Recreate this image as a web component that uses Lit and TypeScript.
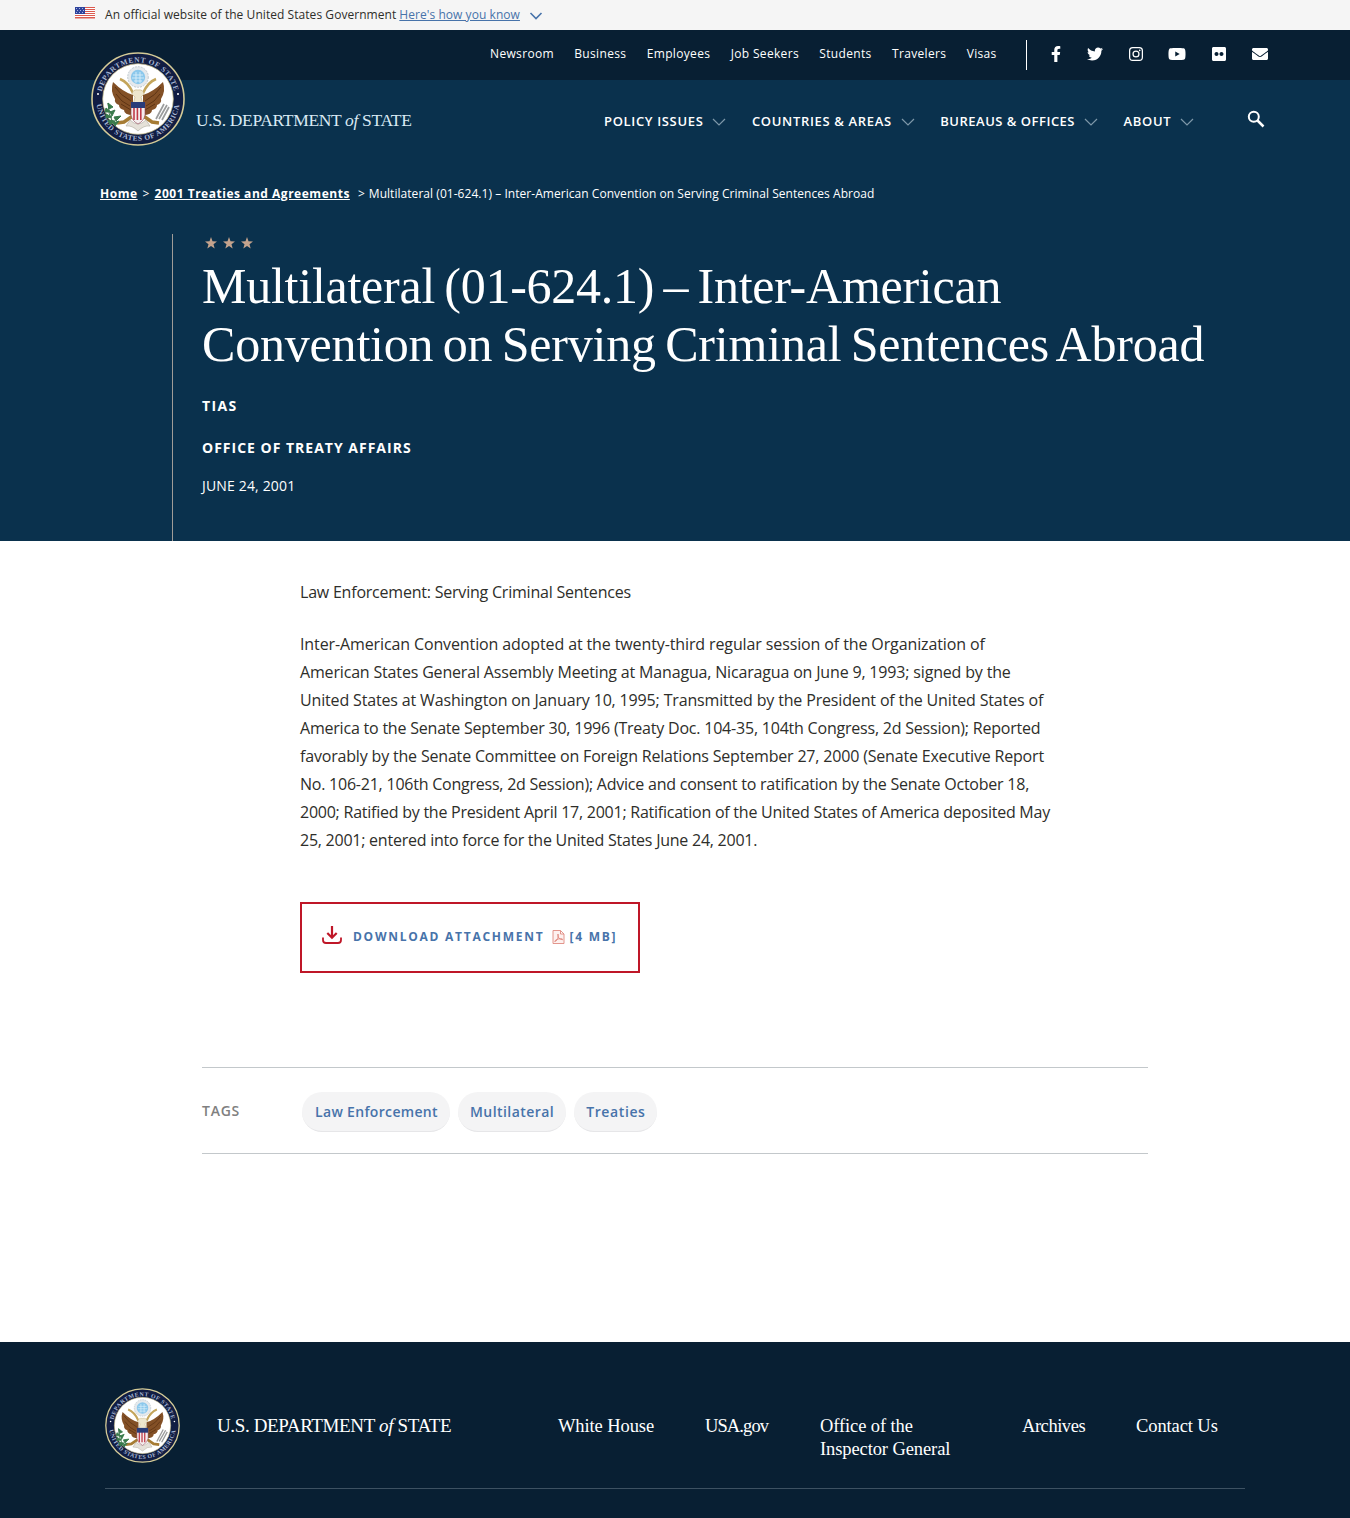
import { LitElement, html, css, svg } from "lit";
import { customElement, property } from "lit/decorators.js";

@customElement("state-seal")
class StateSeal extends LitElement {
  @property({ type: Number }) size = 94;
  static styles = css`
    :host { display: block; line-height: 0; }
    .ring { font: 700 7.4px "Liberation Serif", serif; fill: #a9b8d4; letter-spacing: 0.75px; }
  `;
  render() {
    const stripes = [43, 46.4, 49.8].map((x) => svg`<path d="M${x} 53v15" stroke="#c03a48" stroke-width="1.6"/>`);
    return html`<svg width=${this.size} height=${this.size} viewBox="0 0 94 94" role="img" aria-label="Department of State seal">
      <defs>
        <path id="top" d="M10.2 47a36.8 36.8 0 0 1 73.6 0"/>
        <path id="bottom" d="M5.2 47a41.8 41.8 0 0 0 83.6 0"/>
      </defs>
      <circle cx="47" cy="47" r="46" fill="#111d43" stroke="#d5cb97" stroke-width="1.6"/>
      <circle cx="47" cy="47" r="35.3" fill="#fff" stroke="#c8bd85" stroke-width=".7"/>
      <text class="ring"><textPath href="#top" startOffset="50%" text-anchor="middle" textLength="101">DEPARTMENT OF STATE</textPath></text>
      <text class="ring"><textPath href="#bottom" startOffset="50%" text-anchor="middle" textLength="120">UNITED STATES OF AMERICA</textPath></text>
      <circle cx="7" cy="42" r="1" fill="#fff"/><circle cx="87" cy="42" r="1" fill="#fff"/>
      <circle cx="47" cy="25" r="10.3" fill="#e5e9ec" stroke="#bfc9cf" stroke-width="1" stroke-dasharray="2 1"/>
      <circle cx="47" cy="25" r="7.2" fill="#8bc8ec"/>
      <path d="M42 23h10M41 26h12M43 29h8M45 20v11M49 20v11" stroke="#d8eefa" stroke-width=".9"/>
      <path d="M29 27q8 3 13 14M65 27q-8 3-13 14" stroke="#c4a55b" stroke-width="2.6" fill="none"/>
      <path d="M42 43Q32 40 22 30q-3 9 2 17-1 4 4 6 0 4 5 5 0 5 9 5zM52 43q10-3 20-13 3 9-2 17 1 4-4 6 0 4-5 5 0 5-9 5z" fill="#835026"/>
      <path d="M24 35q5 8 16 14M25 42q5 8 14 12M30 52l10 6M70 35q-5 8-16 14M69 42q-5 8-14 12M64 52l-10 6" stroke="#5e3414" stroke-width="1" fill="none"/>
      <path d="M47 38q-5-1-6 4l3 3-2 8h10l-2-8 3-3q-1-5-6-4z" fill="#eee6cd" stroke="#bba36a" stroke-width=".5"/>
      <path d="M43 63L33 70l-7 1M51 63l10 7 7 1" stroke="#a67c34" stroke-width="3.4" fill="none"/>
      <path d="M22 71q-5-9-5-20" stroke="#386741" fill="none"/>
      <path d="M17 51l5 4-4 2zM15 56l5 4-6 0zM24 58l-3 6-2-4zM15 62l6 3-6 1zM30 64l-5 5-2-4zM17 68l7 1-5 4zM28 69l-4 5-2-3z" fill="#397a4b" stroke="#397a4b"/>
      <path d="M65 67L73 52M68 67l8-14M71 68l7-13" stroke="#9b9c9c" stroke-width="1.700"/>
      <path d="M39 68q8 8 16 0l4 6q-6-1-12 5-6-6-12-5z" fill="#e5e1d9" stroke="#b5b0a5" stroke-width=".7"/>
      <path d="M40 51h14v12q-1 6-7 9-6-3-7-9z" fill="#f4eeee" stroke="#8e4052" stroke-width=".6"/>
      ${stripes}
      <path d="M40 50h14v6H40z" fill="#293c79"/>
    </svg>`;
  }
}

const chevron = html`<svg class="chev" width="14" height="8" viewBox="0 0 14 8"><path d="M1 1l6 6 6-6" fill="none" stroke="currentColor" stroke-width="1.200"/></svg>`;

const social = [
  { name: "Facebook", w: 10, box: "0 0 320 512", d: "M279.14 288l14.22-92.66h-88.91v-60.13c0-25.35 12.42-50.06 52.24-50.06h40.42V6.26S260.43 0 225.36 0c-73.22 0-121.08 44.38-121.08 124.72v70.62H22.89V288h81.39v224h100.17V288z" },
  { name: "Twitter", w: 16, box: "0 0 512 512", d: "M459.37 151.716c.325 4.548.325 9.097.325 13.645 0 138.72-105.583 298.558-298.558 298.558-59.452 0-114.68-17.219-161.137-47.106 8.447.974 16.568 1.299 25.34 1.299 49.055 0 94.213-16.568 130.274-44.832-46.132-.975-84.792-31.188-98.112-72.772 6.498.974 12.995 1.624 19.818 1.624 9.421 0 18.843-1.3 27.614-3.573-48.081-9.747-84.143-51.98-84.143-102.985v-1.299c13.969 7.797 30.214 12.67 47.431 13.319-28.264-18.843-46.781-51.005-46.781-87.391 0-19.492 5.197-37.36 14.294-52.954 51.655 63.675 129.3 105.258 216.365 109.807-1.624-7.797-2.599-15.918-2.599-24.04 0-57.828 46.782-104.934 104.934-104.934 30.213 0 57.502 12.67 76.67 33.137 23.715-4.548 46.456-13.32 66.599-25.34-7.798 24.366-24.366 44.833-46.132 57.827 21.117-2.273 41.584-8.122 60.426-16.243-14.292 20.791-32.161 39.308-52.628 54.253z" },
  { name: "Instagram", w: 14, box: "32 0 448 512", d: "M150 32h212a118 118 0 0 1 118 118v212a118 118 0 0 1-118 118H150A118 118 0 0 1 32 362V150A118 118 0 0 1 150 32zm5 40a83 83 0 0 0-83 83v202a83 83 0 0 0 83 83h202a83 83 0 0 0 83-83V155a83 83 0 0 0-83-83zM256 141a115 115 0 1 1 0 230 115 115 0 0 1 0-230zm0 40a75 75 0 1 0 0 150 75 75 0 0 0 0-150zM375 110a27 27 0 1 1 0 54 27 27 0 0 1 0-54z" },
  { name: "YouTube", w: 18, box: "0 0 576 512", d: "M549.655 124.083c-6.281-23.65-24.787-42.276-48.284-48.597C458.781 64 288 64 288 64S117.22 64 74.629 75.486c-23.497 6.322-42.003 24.947-48.284 48.597-11.412 42.867-11.412 132.305-11.412 132.305s0 89.438 11.412 132.305c6.281 23.65 24.787 41.5 48.284 47.821C117.22 448 288 448 288 448s170.78 0 213.371-11.486c23.497-6.321 42.003-24.171 48.284-47.821 11.412-42.867 11.412-132.305 11.412-132.305s0-89.438-11.412-132.305zm-317.51 213.508V175.185l142.739 81.205-142.739 81.201z" },
  { name: "Flickr", w: 14, box: "0 0 448 512", d: "M400 32H48C21.500 32 0 53.500 0 80v352c0 26.500 21.500 48 48 48h352c26.500 0 48-21.500 48-48V80c0-26.500-21.500-48-48-48zM144.500 319c-35.100 0-63.500-28.400-63.500-63.500s28.400-63.500 63.500-63.500 63.500 28.400 63.500 63.500-28.400 63.500-63.500 63.500zm159 0c-35.100 0-63.500-28.400-63.500-63.500s28.400-63.500 63.500-63.500 63.500 28.400 63.500 63.500-28.400 63.500-63.500 63.500z" },
  { name: "Email", w: 16, box: "0 0 512 512", d: "M502.300 190.800c3.900-3.100 9.700-.2 9.700 4.700V400c0 26.500-21.500 48-48 48H48c-26.500 0-48-21.500-48-48V195.600c0-5 5.700-7.800 9.700-4.700 22.400 17.400 52.100 39.500 154.100 113.600 21.100 15.400 56.700 47.800 92.200 47.600 35.700.3 72-32.800 92.300-47.600 102-74.100 131.600-96.300 154-113.700zM256 320c23.200.4 56.600-29.200 73.400-41.400 132.700-96.300 142.800-104.700 173.400-128.700 5.800-4.500 9.200-11.500 9.200-18.900v-19c0-26.500-21.500-48-48-48H48c-26.500 0-48 21.500-48 48v19c0 7.400 3.400 14.300 9.200 18.900 30.600 23.900 40.700 32.400 173.400 128.700 16.800 12.200 50.200 41.800 73.400 41.400z" },
];

const treaty = [
  "Inter-American Convention adopted at the twenty-third regular session of the Organization of",
  "American States General Assembly Meeting at Managua, Nicaragua on June 9, 1993; signed by the",
  "United States at Washington on January 10, 1995; Transmitted by the President of the United States of",
  "America to the Senate September 30, 1996 (Treaty Doc. 104-35, 104th Congress, 2d Session); Reported",
  "favorably by the Senate Committee on Foreign Relations September 27, 2000 (Senate Executive Report",
  "No. 106-21, 106th Congress, 2d Session); Advice and consent to ratification by the Senate October 18,",
  "2000; Ratified by the President April 17, 2001; Ratification of the United States of America deposited May",
  "25, 2001; entered into force for the United States June 24, 2001.",
];

@customElement("app-root")
class AppRoot extends LitElement {
  static styles = css`
    :host { display: block; height: 1518px; overflow: hidden; background: #fff; color: #323a45; font-family: "Open Sans", sans-serif; }
    * { box-sizing: border-box; }
    a { color: inherit; text-decoration: none; white-space: nowrap; }
    svg { display: block; flex: none; }
    p, h1 { margin: 0; }
    .gov { height: 30px; background: #f5f5f5; display: flex; align-items: flex-start; padding: 6px 0 0 75px; font-size: 12px; line-height: 17px; color: #2e2e2a; white-space: nowrap; letter-spacing: .055px; }
    .flag { margin: 1px 10px 0 0; }
    .gov a { color: #4773aa; text-decoration: underline; margin-left: 3px; }
    .gov .down { margin: 6px 0 0 9px; color: #4773aa; }
    .hero { height: 511px; background: #0a314d; color: #fff; }
    .util { height: 50px; background: #081f33; display: flex; padding: 10px 82px 0 490px; }
    .links { display: flex; gap: 20.300px; width: 537px; height: 30px; border-right: 1px solid #fff; font-size: 12px; line-height: 28px; letter-spacing: .34px; }
    .social { display: flex; flex: 1; justify-content: space-between; padding: 6px 0 0 24px; }
    .main { height: 72px; display: flex; padding-left: 91px; }
    .brandseal { margin-top: -28px; }
    .brand { font-family: "Liberation Serif", serif; white-space: nowrap; }
    .main .brand { width: 408px; margin: 28px 0 0 11px; font-size: 17.500px; line-height: 24px; letter-spacing: -.34px; color: #d9e9f4; }
    .menu { display: flex; gap: 25.500px; font-size: 13px; font-weight: 600; line-height: 20px; letter-spacing: .66px; padding-top: 31px; }
    .menu a { display: flex; }
    .menu .i2 { letter-spacing: .5px; }
    .menu .chev { margin: 7px 0 0 9px; color: #7e98a9; }
    .search { margin: 30px 0 0 53px; }
    .crumbs { display: flex; height: 36px; align-items: flex-start; padding: 33px 0 0 100px; font-size: 12px; line-height: 17px; letter-spacing: .045px; white-space: nowrap; }
    .crumbs a { font-weight: 700; text-decoration: underline; letter-spacing: .52px; }
    .crumbs .sep { margin: 0 5px; }
    .crumbs .sep2 { margin: 0 4px 0 8px; }
    .title { margin: 46px 0 0 172px; height: 307px; border-left: 1px solid #a09c98; padding: 3px 0 0 29px; }
    .stars { display: flex; gap: 6px; padding-left: 3px; }
    h1 { margin-top: 8px; font: 400 50px/58px "Liberation Serif", serif; letter-spacing: -.25px; word-spacing: -3px; white-space: nowrap; }
    h1 span { display: block; }
    h1 .second { letter-spacing: -.19px; }
    .meta { font-size: 14px; line-height: 20px; font-weight: 700; letter-spacing: 1px; }
    .m1 { margin-top: 23px; letter-spacing: 1.400px; }
    .m2 { margin-top: 22px; }
    .date { margin-top: 18px; font-size: 14px; line-height: 20px; letter-spacing: .16px; }
    .article { height: 526px; padding: 37px 0 0 300px; font-size: 16px; line-height: 28px; letter-spacing: -.215px; color: #2e2e2a; white-space: nowrap; }
    .article p + p { margin-top: 24px; }
    .ln { display: block; }
    .ln:nth-child(1) { letter-spacing: -.115px; }
    .ln:nth-child(2) { letter-spacing: -.17px; }
    .ln:nth-child(3) { letter-spacing: -.155px; }
    .ln:nth-child(4) { letter-spacing: -.21px; }
    .ln:nth-child(5) { letter-spacing: -.18px; }
    .ln:nth-child(6) { letter-spacing: -.23px; }
    .ln:nth-child(7), .ln:nth-child(8) { letter-spacing: -.243px; }
    .download { margin-top: 48px; width: 340px; height: 71px; border: 2px solid #bf1728; display: flex; align-items: flex-start; padding: 21px 0 0 20px; font-size: 12px; line-height: 24px; font-weight: 700; letter-spacing: 1.740px; color: #4773aa; }
    .dl { margin: 1px 11px 0 0; }
    .pdf { margin: 5px 5px 0 7px; }
    .tags { width: 946px; height: 87px; margin-left: 202px; border: solid #c3c8cb; border-width: 1px 0; display: flex; align-items: flex-start; padding-top: 24px; }
    .label { width: 100px; font-size: 14px; font-weight: 600; line-height: 38px; color: #808080; letter-spacing: .75px; }
    .pills { display: flex; gap: 8px; }
    .pills a { height: 40px; border-radius: 20px; background: #f4f4f5; border-bottom: 1px solid #e6e6e8; padding: 0 12px 0 13px; font-size: 14px; font-weight: 600; line-height: 40px; color: #4773aa; letter-spacing: .33px; }
    .pills a + a { padding: 0 12px; letter-spacing: .45px; }
    .pills a + a + a { letter-spacing: .6px; }
    .foot { margin-top: 188px; height: 176px; background: #081f33; color: #fff; padding: 46px 105px 0; }
    .row { height: 101px; border-bottom: 1px solid #3d5162; display: flex; font-family: "Liberation Serif", serif; }
    .row .brand { margin: 26px 0 0 37px; width: 341px; font-size: 19px; line-height: 24px; letter-spacing: -.36px; }
    .row nav { display: grid; grid-template-columns: 147px 115px 202px 114px auto; font-size: 18.500px; line-height: 23px; padding-top: 27px; letter-spacing: -.1px; }
    .row nav .tight { letter-spacing: -.9px; }
    .row nav .snug { letter-spacing: -.45px; }
  `;
  render() {
    const star = html`<svg width="12" height="12" viewBox="0 0 12 12"><path fill="#c4a38d" d="M6 0l1.500 4.200L12 4.400 8.500 7.200 9.700 11.500 6 9 2.300 11.500 3.500 7.200 0 4.400l4.500-.2z"/></svg>`;
    return html`
      <div class="gov">
        <svg class="flag" width="20" height="12" viewBox="0 0 20 12"><path fill="#fff" d="M0 0h20v12H0z"/><path fill="#db5a4f" d="M0 0h20v1H0zM0 2h20v1H0zM0 4h20v1H0zM0 6h20v1H0zM0 8h20v1H0zM0 10h20v1.500H0z"/><path fill="#2f449c" d="M0 0h10v7H0z"/><path fill="#a9b4e0" d="M1 1h1v1H1zM4 1h1v1H4zM7 1h1v1H7zM2 3h1v1H2zM5 3h1v1H5zM8 3h1v1H8zM1 5h1v1H1zM4 5h1v1H4zM7 5h1v1H7z"/></svg>
        <span>An official website of the United States Government</span><a href="#">Here's how you know</a>
        <svg class="down" width="14" height="8" viewBox="0 0 14 8"><path d="M1.500 1l5.500 5.500L12.500 1" fill="none" stroke="currentColor" stroke-width="1.600"/></svg>
      </div>
      <header class="hero">
        <div class="util">
          <nav class="links">${["Newsroom", "Business", "Employees", "Job Seekers", "Students", "Travelers", "Visas"].map((t) => html`<a href="#">${t}</a>`)}</nav>
          <div class="social">${social.map((s) => html`<svg width=${s.w} height="16" viewBox=${s.box} aria-label=${s.name}><path fill="#fff" fill-rule="evenodd" d=${s.d}/></svg>`)}</div>
        </div>
        <div class="main">
          <state-seal class="brandseal" .size=${94}></state-seal>
          <div class="brand">U.S. DEPARTMENT <i>of</i> STATE</div>
          <nav class="menu">${["POLICY ISSUES", "COUNTRIES & AREAS", "BUREAUS & OFFICES", "ABOUT"].map((t, i) => html`<a href="#" class="i${i}">${t}${chevron}</a>`)}</nav>
          <svg class="search" width="18" height="18" viewBox="0 0 18 18"><circle cx="6.800" cy="6.800" r="5" fill="none" stroke="#fff" stroke-width="2"/><path d="M10.500 10.500l6 6" stroke="#fff" stroke-width="2.500"/></svg>
        </div>
        <div class="crumbs"><a href="#">Home</a><span class="sep">&gt;</span><a href="#">2001 Treaties and Agreements</a><span class="sep2">&gt;</span><span>Multilateral (01-624.1) – Inter-American Convention on Serving Criminal Sentences Abroad</span></div>
        <div class="title">
          <div class="stars">${star}${star}${star}</div>
          <h1><span>Multilateral (01-624.1) – Inter-American</span><span class="second">Convention on Serving Criminal Sentences Abroad</span></h1>
          <p class="meta m1">TIAS</p>
          <p class="meta m2">OFFICE OF TREATY AFFAIRS</p>
          <p class="date">JUNE 24, 2001</p>
        </div>
      </header>
      <main class="article">
        <p>Law Enforcement: Serving Criminal Sentences</p>
        <p>${treaty.map((t) => html`<span class="ln">${t}</span>`)}</p>
        <a class="download" href="#">
          <svg class="dl" width="20" height="18" viewBox="0 0 20 18"><path d="M1 11.500v2.500q0 3 3 3h12q3 0 3-3v-2.500" fill="none" stroke="#bf1728" stroke-width="1.800"/><path d="M10 0v11M5.300 7l4.700 4.700L14.700 7" fill="none" stroke="#bf1728" stroke-width="2.200"/></svg>
          <span>DOWNLOAD ATTACHMENT</span>
          <svg class="pdf" width="13" height="14" viewBox="0 0 13 14"><path d="M1 .5h7.500l3.500 3.500v9.500H1zM8.500.5V4H12M6 4q-.7 1 .2 3 1 2.500 4.300 2.800.8-1.800-4.300-.8-3.200.8-3.500 2.500 1.300.5 3-3Q7 5.500 6 4z" fill="#fdf1ef" stroke="#e08a80" stroke-width=".9"/></svg>
          <span>[4 MB]</span>
        </a>
      </main>
      <section class="tags"><div class="label">TAGS</div><div class="pills">${["Law Enforcement", "Multilateral", "Treaties"].map((t) => html`<a href="#">${t}</a>`)}</div></section>
      <footer class="foot"><div class="row">
        <state-seal .size=${75}></state-seal>
        <div class="brand">U.S. DEPARTMENT <i>of</i> STATE</div>
        <nav><a href="#">White House</a><a href="#" class="tight">USA.gov</a><a href="#">Office of the<br>Inspector General</a><a href="#" class="snug">Archives</a><a href="#">Contact Us</a></nav>
      </div></footer>`;
  }
}
